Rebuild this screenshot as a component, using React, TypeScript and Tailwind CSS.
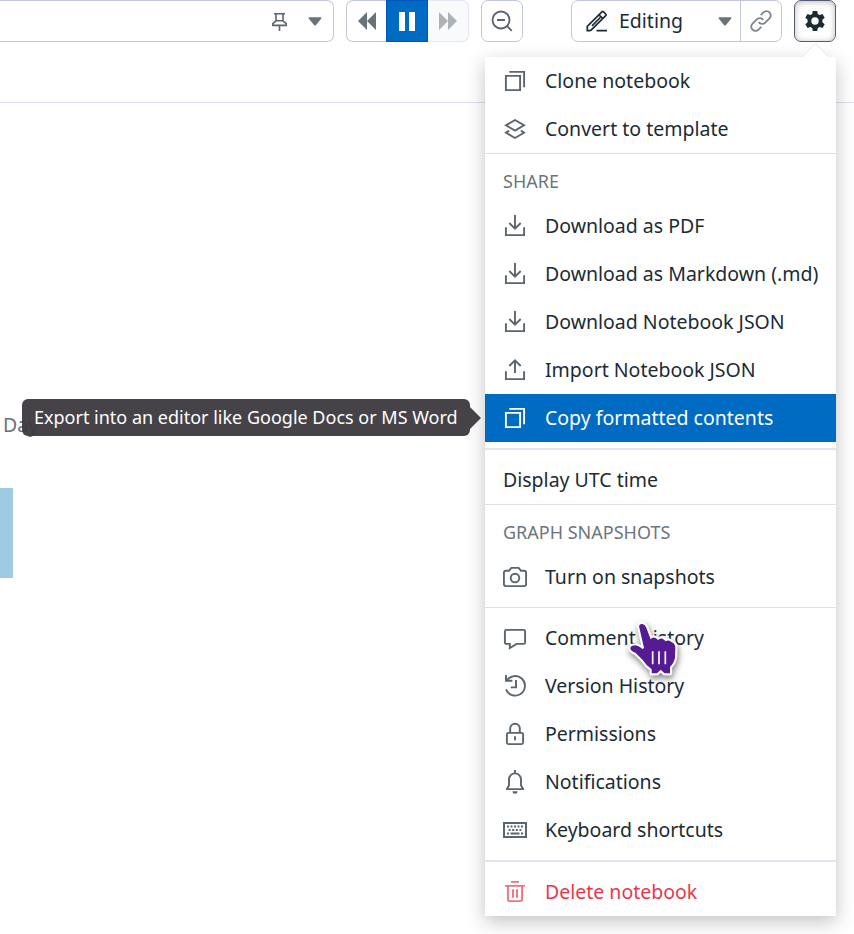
import type { ReactNode } from "react";

type IconName =
  | "copy" | "layers" | "download" | "upload" | "camera" | "comment"
  | "history" | "lock" | "bell" | "keyboard" | "trash";

const shapes: Record<IconName, ReactNode> = {
  copy: (
    <>
      <path d="M2.9 6.9h14.2v14.2H2.9z" />
      <path d="M6.3 2.9h14.8v15.3" />
    </>
  ),
  layers: (
    <>
      <path d="M12 3 21 8.3 12 13.6 3 8.3z" />
      <path d="M6 13.6 3 15.7l9 5.3 9-5.3-3-2.1" />
    </>
  ),
  download: (
    <>
      <path d="M12 1v13.5M6.3 9l5.7 5.7L17.7 9" />
      <path d="M2.9 13.2v7.9h18.2v-7.9" />
    </>
  ),
  upload: (
    <>
      <path d="M12 15V2.3M6.3 8 12 2.3 17.7 8" />
      <path d="M2.9 13.2v7.9h18.2v-7.9" />
    </>
  ),
  camera: (
    <>
      <path d="M2.9 5.7H6l2.4-2.8h7.2L18 5.7h3.1q2 0 2 2v11.4q0 2-2 2H2.9q-2 0-2-2V7.7q0-2 2-2z" />
      <circle cx="12" cy="13" r="4.3" />
    </>
  ),
  comment: <path d="M3.4 3.9h17.2q1.5 0 1.5 1.5v11q0 1.5-1.5 1.5h-7L6.8 22v-4.1H3.4q-1.5 0-1.5-1.5v-11q0-1.5 1.5-1.5z" />,
  history: (
    <>
      <path d="M3 1v5.8h6.4" />
      <path d="M3.8 6.7A9.8 9.8 0 1 1 3 15.3" />
      <path d="M13 6v7.4H7.8" />
    </>
  ),
  lock: (
    <>
      <rect x="3.9" y="10.9" width="16.2" height="11.2" rx="1.5" />
      <path d="M7.2 10.9V6.6a4.8 4.8 0 0 1 9.6 0v4.3M12 14.3v4" />
    </>
  ),
  bell: (
    <>
      <path d="M12 0v3M3 19.1h18M4 19l2-3.7V9.4a6 6 0 0 1 12 0v5.9l2 3.7" />
      <path d="M9.5 21.2h5a2.5 2.5 0 0 1-5 0z" fill="currentColor" stroke="none" />
    </>
  ),
  keyboard: (
    <>
      <path d="M1 5h22v14H1z" strokeWidth="2" />
      <path d="M4 8.5h16" strokeDasharray="2 1.5" />
      <path d="M5.6 12h13" strokeDasharray="2 1.6" />
      <path d="M4 15.5h2M7.5 15.5h9M18 15.5h2" />
    </>
  ),
  trash: (
    <>
      <path d="M8 1.9h8M2 5.9h20M4.9 6v13.3q0 1.8 1.8 1.8h10.6q1.8 0 1.8-1.8V6" />
      <path d="M10 9.2v8.6M14 9.2v8.6" />
    </>
  ),
};

function Icon({ name }: { name: IconName }) {
  return (
    <svg width="24" height="24" viewBox="0 0 24 24" fill="none" stroke="currentColor" strokeWidth="1.9" className="shrink-0">
      {shapes[name]}
    </svg>
  );
}

function Item({ icon, label, tone = "normal" }: { icon: IconName; label: string; tone?: "normal" | "active" | "danger" }) {
  const row = tone === "active" ? "bg-[#006bc2] text-white" : tone === "danger" ? "text-[#eb364b]" : "text-[#1c2b34]";
  const glyph = tone === "active" ? "text-white" : tone === "danger" ? "text-[#f1717f]" : "text-[#5b656d]";
  return (
    <div className={`flex h-12 items-center gap-[18px] px-[18px] ${row}`}>
      <span className={glyph}><Icon name={icon} /></span>
      <span className="whitespace-nowrap">{label}</span>
    </div>
  );
}

function Heading({ children }: { children: ReactNode }) {
  return <div className="flex h-12 items-center px-[18px] pt-[7px] text-[18px] text-[#6c757c]">{children}</div>;
}

function Caret() {
  return (
    <svg width="14" height="9" viewBox="0 0 14 9" fill="#68727a">
      <path d="M1.2.3h11.6q1 .5.3 1.4L8 8Q7 9 6 8L.9 1.700Q.2.8 1.2.3z" />
    </svg>
  );
}

function Toolbar() {
  return (
    <div className="flex h-[42px] text-[#5b656d]">
      <div className="flex w-[334px] items-center justify-end rounded-r-[7px] border border-l-0 border-[#c3c6df] pr-[11px]">
        <svg width="24" height="24" viewBox="0 0 24 24" fill="none" stroke="currentColor" strokeWidth="1.6" className="mr-4">
          <path d="M6 4.8h11M8 5v7.2M15 5v7.2M8 11.8h7l3.2 2.8v1.8H4.8v-1.8zM11.5 16.5V22" />
        </svg>
        <Caret />
      </div>
      <div className="ml-3 flex w-[123px]">
        <div className="flex w-10 items-center justify-center rounded-l-[7px] border border-r-0 border-[#c3c6df]">
          <svg width="18" height="18" viewBox="0 0 18 18" fill="#68727a"><path d="M9 0v18L0 9zM18 0v18L9 9z" /></svg>
        </div>
        <div className="flex w-[42px] items-center justify-center gap-1 border border-[#0056b8] bg-[#006bc2]">
          <span className="h-[19px] w-1.5 bg-white" />
          <span className="h-[19px] w-1.5 bg-white" />
        </div>
        <div className="flex flex-1 items-center justify-center rounded-r-[7px] border border-l-0 border-[#e5e6f2] bg-[#f9fafc]">
          <svg width="18" height="18" viewBox="0 0 18 18" fill="#adb2b7"><path d="M0 0v18l9-9zM9 0v18l9-9z" /></svg>
        </div>
      </div>
      <div className="ml-3 flex w-[42px] items-center justify-center rounded-[7px] border border-[#c3c6df]">
        <svg width="24" height="24" viewBox="0 0 24 24" fill="none" stroke="currentColor" strokeWidth="1.8">
          <circle cx="11" cy="11" r="8.5" /><path d="M7 11h8M17 17l4.8 4.8" />
        </svg>
      </div>
      <div className="ml-12 flex w-[211px] rounded-[7px] border border-[#c3c6df] text-[19.5px] text-[#1c2b34]">
        <div className="flex w-[169px] items-center border-r border-[#c3c6df] pl-[14px] pr-2">
          <svg width="22" height="22" viewBox="0 0 22 22" fill="none" stroke="currentColor" strokeWidth="1.7">
            <path d="M1.3 20.700V16.400L15.900 1.800q.8-.8 1.600 0l2.200 2.200q.8.8 0 1.600L5.600 19.700q-1 1-2 1zM13 4.800l3.900 3.900M6 15.800 14.300 7.500M10.500 20.600H21" />
          </svg>
          <span className="ml-[11px] flex-1">Editing</span>
          <Caret />
        </div>
        <div className="flex flex-1 items-center justify-center text-[#7c858c]">
          <svg width="24" height="24" viewBox="0 0 24 24" fill="none" stroke="currentColor" strokeWidth="1.8">
            <path d="M11.7 6.1 14.5 3.3a4.2 4.2 0 0 1 6 0 4.2 4.2 0 0 1 0 6l-4.3 4.3a4.2 4.2 0 0 1-6.4-.5" />
            <path d="M12.3 17.9 9.5 20.7a4.2 4.2 0 0 1-6 0 4.2 4.2 0 0 1 0-6l4.3-4.3a4.2 4.2 0 0 1 6.4.5" />
          </svg>
        </div>
      </div>
      <div className="ml-3 flex w-[42px] items-center justify-center rounded-[7px] border border-[#555b73] text-[#1c2b34] shadow-[inset_0_1px_6px_rgba(0,0,0,0.28)]">
        <svg width="24" height="24" viewBox="0 0 24 24" fill="currentColor">
          <path fillRule="evenodd" d="M9.8 2h4.4l.6 3 1.8 1 2.9-1 2.2 3.8-2.3 2v2.4l2.3 2-2.2 3.8-2.9-1-1.8 1-.6 3H9.8l-.6-3-1.8-1-2.9 1-2.2-3.8 2.3-2v-2.4l-2.3-2L4.5 5l2.9 1 1.8-1zM12 8.3a3.7 3.7 0 1 0 0 7.4 3.7 3.7 0 0 0 0-7.4z" />
        </svg>
      </div>
    </div>
  );
}

function Menu() {
  return (
    <div className="absolute left-[485px] top-[57px] w-[351px] bg-white text-[19.5px] shadow-[0_6px_18px_rgba(0,0,0,0.24)]">
      <svg width="28" height="15" viewBox="0 0 28 15" className="absolute -top-[14px] left-[317px]">
        <path d="M0 14 13.5.7 27 14v1H0z" fill="white" />
        <path d="M0 14 13.5.7 27 14" fill="none" stroke="#e4e4ee" />
      </svg>
      <Item icon="copy" label="Clone notebook" />
      <Item icon="layers" label="Convert to template" />
      <div className="h-px bg-[#dfe0ea]" />
      <Heading>SHARE</Heading>
      <Item icon="download" label="Download as PDF" />
      <Item icon="download" label="Download as Markdown (.md)" />
      <Item icon="download" label="Download Notebook JSON" />
      <Item icon="upload" label="Import Notebook JSON" />
      <Item icon="copy" label="Copy formatted contents" tone="active" />
      <div className="my-1.5 h-0.5 bg-[#e1e5ee]" />
      <div className="flex h-12 items-center px-[18px] text-[#1c2b34]">Display UTC time</div>
      <div className="h-px bg-[#dfe0ea]" />
      <Heading>GRAPH SNAPSHOTS</Heading>
      <Item icon="camera" label="Turn on snapshots" />
      <div className="my-1.5 h-px bg-[#dfe0ea]" />
      <Item icon="comment" label="Comment history" />
      <Item icon="history" label="Version History" />
      <Item icon="lock" label="Permissions" />
      <Item icon="bell" label="Notifications" />
      <Item icon="keyboard" label="Keyboard shortcuts" />
      <div className="my-1.5 h-0.5 bg-[#e1e5ee]" />
      <Item icon="trash" label="Delete notebook" tone="danger" />
    </div>
  );
}

function Tooltip() {
  return (
    <div className="absolute left-[22px] top-[399px] flex h-[37px] w-[448px] items-center rounded-[6px] bg-[#3b393d]/95 pl-3 text-[18px] text-white">
      <span className="whitespace-nowrap">Export into an editor like Google Docs or MS Word</span>
      <svg width="11" height="22" viewBox="0 0 11 22" className="absolute left-[448px] top-2" fill="#454348">
        <path d="M0 0 11 11 0 22z" />
      </svg>
    </div>
  );
}

function HandCursor() {
  return (
    <svg width="70" height="76" viewBox="0 0 210 228" className="absolute left-[620px] top-[615px] drop-shadow-[1px_3px_3px_rgba(0,0,0,0.5)]">
      <path
        d="M57 34Q59 26 67 27Q75 28 79 38L92 73Q98 64 107 69L114 75Q122 66 132 74L137 79Q145 73 153 80Q166 84 166 98L165 128Q162 144 150 155L150 175H134L122 164L111 175H95V163Q80 153 68 135L47 114Q29 106 31 98Q35 91 47 91Q57 93 68 102L72 99Z"
        fill="#561a95"
        stroke="white"
        strokeWidth="13"
        strokeLinejoin="round"
        paintOrder="stroke"
      />
      <path d="M98 109v39M117 109v39M136 109v39" stroke="white" strokeWidth="5" />
    </svg>
  );
}

export default function App() {
  return (
    <div className="relative h-[934px] w-[854px] overflow-hidden bg-white font-['Noto_Sans',sans-serif]">
      <header className="h-[103px] border-b border-[#dddfec]">
        <Toolbar />
      </header>
      <main className="pt-[307px]">
        <div className="h-[78px] pl-[3px] text-[19.5px] leading-[30px] text-[#68727a]">Day</div>
        <div className="h-[90px] w-[13px] bg-[#9ccbe2]" />
      </main>
      <Menu />
      <Tooltip />
      <HandCursor />
    </div>
  );
}
